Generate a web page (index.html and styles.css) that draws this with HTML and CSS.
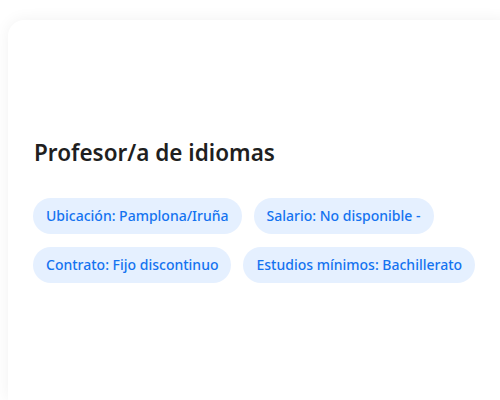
FILE: index.html
```html
<!DOCTYPE html>
<html lang="es">
<head>
<meta charset="utf-8">
<link rel="stylesheet" href="styles.css">
</head>
<body>
<main class="page">
  <section class="card">
    <h1 class="title">Profesor/a de idiomas</h1>
    <ul class="chips">
      <li class="chip">Ubicación: Pamplona/Iruña</li>
      <li class="chip">Salario: No disponible -</li>
      <li class="chip">Contrato: Fijo discontinuo</li>
      <li class="chip">Estudios mínimos: Bachillerato</li>
    </ul>
  </section>
</main>
</body>
</html>
```
FILE: styles.css
```css
html, body {
  margin: 0;
  padding: 0;
  background: #ffffff;
  height: 100%;
  overflow: hidden;
}
.page {
  box-sizing: border-box;
  height: 100%;
  padding: 20px 0 0 8px;
  display: flex;
  font-family: "Noto Sans", "Open Sans", sans-serif;
}
.card {
  flex: 1;
  background: #ffffff;
  border-radius: 16px 0 0 0;
  box-shadow: 0 0 16px rgba(0, 0, 0, 0.06);
  padding: 118px 25px 0 25px;
}
.title {
  margin: 0 0 30px 1px;
  font-size: 22.5px;
  font-weight: 600;
  color: #1f1f1f;
  line-height: 30px;
}
.chips {
  list-style: none;
  margin: 0;
  padding: 0;
  display: flex;
  flex-wrap: wrap;
  gap: 13px 12px;
  width: 450px;
}
.chip {
  background: #e5f0ff;
  color: #1473f0;
  font-size: 14px;
  font-weight: 500;
  height: 36px;
  line-height: 36px;
  padding: 0 13px;
  border-radius: 18px;
}
```
